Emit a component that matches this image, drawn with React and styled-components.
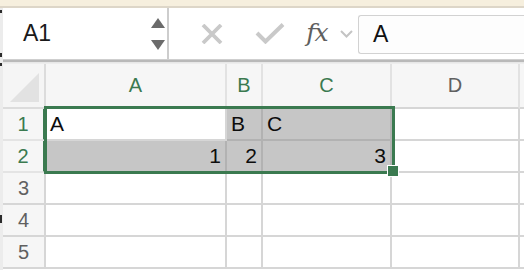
import React from "react";
import styled, { createGlobalStyle } from "styled-components";

const Global = createGlobalStyle`
  html, body { margin: 0; padding: 0; background: #fff; }
  body { width: 524px; height: 270px; overflow: hidden; font-family: "Liberation Sans", Arial, sans-serif; }
`;

const Page = styled.div`
  width: 524px;
  height: 270px;
  overflow: hidden;
  display: flex;
  flex-direction: column;
`;

const TopStrip = styled.div`
  height: 6px;
  background: #f6efde;
  border-bottom: 2px solid #ddd6c8;
  flex: none;
`;

const Body = styled.div`
  display: flex;
  flex: 1;
  min-height: 0;
`;

const LeftEdge = styled.div`
  width: 3px;
  flex: none;
  background:
    linear-gradient(#2c2c2c, #2c2c2c) 0 2px / 2px 3px no-repeat,
    linear-gradient(#2c2c2c, #2c2c2c) 0 45px / 2px 4px no-repeat,
    linear-gradient(#2c2c2c, #2c2c2c) 0 55px / 2px 3px no-repeat,
    linear-gradient(#2c2c2c, #2c2c2c) 0 207px / 2px 8px no-repeat,
    #ececec;
`;

const Main = styled.div`
  flex: 1;
  display: flex;
  flex-direction: column;
  min-width: 0;
`;

const Toolbar = styled.div`
  height: 51px;
  display: flex;
  align-items: stretch;
  background: #fff;
  border-bottom: 1px solid #cfcfcf;
  flex: none;
`;

const Separator = styled.div`
  height: 4px;
  flex: none;
  background: linear-gradient(to bottom, #b9b9b9 0px, #b9b9b9 2px, #e4e4e4 2px, #f0f0f0 4px);
`;

const NameBox = styled.div`
  width: 166px;
  border-right: 2px solid #cdcdcd;
  display: flex;
  align-items: center;
  justify-content: space-between;
  padding: 0 2px 0 20px;
  box-sizing: border-box;
  font-size: 23px;
  color: #1a1a1a;
`;

const Spinner = styled.div`
  display: flex;
  flex-direction: column;
  justify-content: space-between;
  height: 32px;
  margin-top: 1px;
`;

const Arrow = styled.div`
  width: 0;
  height: 0;
  border-left: 7px solid transparent;
  border-right: 7px solid transparent;
  ${(p) =>
    p.$up
      ? "border-bottom: 10px solid #6b6b6b;"
      : "border-top: 10px solid #6b6b6b;"}
`;

const IconSlot = styled.div`
  display: flex;
  align-items: center;
  justify-content: center;
  width: ${(p) => p.$w}px;
  margin-left: ${(p) => p.$ml || 0}px;
  flex: none;
`;

const Fx = styled.span`
  font-family: "DejaVu Serif", "Liberation Serif", serif;
  font-style: italic;
  font-size: 25px;
  color: #5f5f5f;
  letter-spacing: -1px;
  margin-top: -2px;
`;

const FormulaBox = styled.div`
  flex: 1;
  margin: 7px 0 5px 0;
  border: 1px solid #d2d2d2;
  border-right: none;
  border-radius: 3px 0 0 3px;
  background: #fdfdfd;
  display: flex;
  align-items: center;
  padding-left: 14px;
  font-size: 23px;
  color: #111;
`;

const GridWrap = styled.div`
  position: relative;
  flex: 1;
  overflow: hidden;
`;

const Grid = styled.div`
  display: grid;
  grid-template-columns: 43px 181px 36px 129px 128px 10px;
  grid-template-rows: 45px repeat(5, 32px);
`;

const Corner = styled.div`
  background: #f5f5f5;
  border-right: 2px solid #dcdcdc;
  border-bottom: 2px solid #dcdcdc;
  box-sizing: border-box;
  position: relative;
  &::after {
    content: "";
    position: absolute;
    right: 5px;
    bottom: 5px;
    width: 0;
    height: 0;
    border-left: 29px solid transparent;
    border-bottom: 29px solid #e2e2e2;
  }
`;

const ColHead = styled.div`
  background: #f6f6f6;
  border-right: 2px solid #e2e2e2;
  border-bottom: ${(p) => (p.$sel ? "3px solid #3b7a50" : "2px solid #d6d6d6")};
  box-sizing: border-box;
  display: flex;
  align-items: center;
  justify-content: center;
  font-size: 20px;
  color: ${(p) => (p.$sel ? "#3b7a50" : "#606060")};
  padding-top: ${(p) => (p.$sel ? 1 : 0)}px;
`;

const RowHead = styled.div`
  background: #f6f6f6;
  border-right: ${(p) => (p.$sel ? "3px solid #3b7a50" : "2px solid #d6d6d6")};
  border-bottom: 2px solid ${(p) => (p.$sel ? "#e4e4e4" : "#d6d6d6")};
  box-sizing: border-box;
  display: flex;
  align-items: center;
  justify-content: center;
  font-size: 20px;
  color: ${(p) => (p.$sel ? "#3b7a50" : "#606060")};
`;

const Cell = styled.div`
  background: ${(p) => (p.$gray ? "#c6c6c6" : "#fff")};
  border-right: 2px solid ${(p) => (p.$gray ? "#b2b2b2" : "#d6d6d6")};
  border-bottom: 2px solid ${(p) => (p.$gray ? "#b2b2b2" : "#d6d6d6")};
  box-sizing: border-box;
  display: flex;
  align-items: center;
  justify-content: ${(p) => (p.$right ? "flex-end" : "flex-start")};
  padding: 0 4px;
  font-size: 21px;
  color: #0d0d0d;
`;

const Selection = styled.div`
  position: absolute;
  left: 41px;
  top: 42px;
  width: 351px;
  height: 68px;
  border: 3px solid #3b7a50;
  box-sizing: border-box;
  pointer-events: none;
`;

const Handle = styled.div`
  position: absolute;
  left: 385px;
  top: 102px;
  width: 10px;
  height: 10px;
  background: #3b7a50;
  outline: 1px solid #fff;
`;

const cols = ["A", "B", "C", "D"];
const data = {
  1: [
    { t: "A", gray: false },
    { t: "B", gray: true },
    { t: "C", gray: true },
    { t: "" },
  ],
  2: [
    { t: "1", gray: true, right: true },
    { t: "2", gray: true, right: true },
    { t: "3", gray: true, right: true },
    { t: "" },
  ],
};

export default function App() {
  return (
    <Page>
      <Global />
      <TopStrip />
      <Body>
        <LeftEdge />
        <Main>
          <Toolbar>
            <NameBox>
              <span>A1</span>
              <Spinner>
                <Arrow $up />
                <Arrow />
              </Spinner>
            </NameBox>
            <IconSlot $w={24} $ml={31}>
              <svg width="22" height="20" viewBox="0 0 22 20">
                <path d="M2 1 L20 19 M20 1 L2 19" stroke="#c9c9c9" strokeWidth="3.8" fill="none" />
              </svg>
            </IconSlot>
            <IconSlot $w={30} $ml={31}>
              <svg width="30" height="21" viewBox="0 0 30 21">
                <path d="M2 10 L10.5 18.5 L28 1.5" stroke="#c9c9c9" strokeWidth="4" fill="none" />
              </svg>
            </IconSlot>
            <IconSlot $w={32} $ml={16}>
              <Fx>fx</Fx>
            </IconSlot>
            <IconSlot $w={14} $ml={6}>
              <svg width="13" height="8" viewBox="0 0 13 8">
                <path d="M1 1 L6.5 6.5 L12 1" stroke="#c4c4c4" strokeWidth="2" fill="none" />
              </svg>
            </IconSlot>
            <IconSlot $w={5} />
            <FormulaBox>A</FormulaBox>
          </Toolbar>
          <Separator />
          <GridWrap>
            <Grid>
              <Corner />
              {cols.map((c, i) => (
                <ColHead key={c} $sel={i < 3}>
                  {c}
                </ColHead>
              ))}
              <ColHead />
              {[1, 2, 3, 4, 5].map((r) => (
                <React.Fragment key={r}>
                  <RowHead $sel={r <= 2}>{r}</RowHead>
                  {cols.map((c, i) => {
                    const d = (data[r] && data[r][i]) || { t: "" };
                    return (
                      <Cell key={c} $gray={d.gray} $right={d.right}>
                        {d.t}
                      </Cell>
                    );
                  })}
                  <Cell />
                </React.Fragment>
              ))}
            </Grid>
            <Selection />
            <Handle />
          </GridWrap>
        </Main>
      </Body>
    </Page>
  );
}
